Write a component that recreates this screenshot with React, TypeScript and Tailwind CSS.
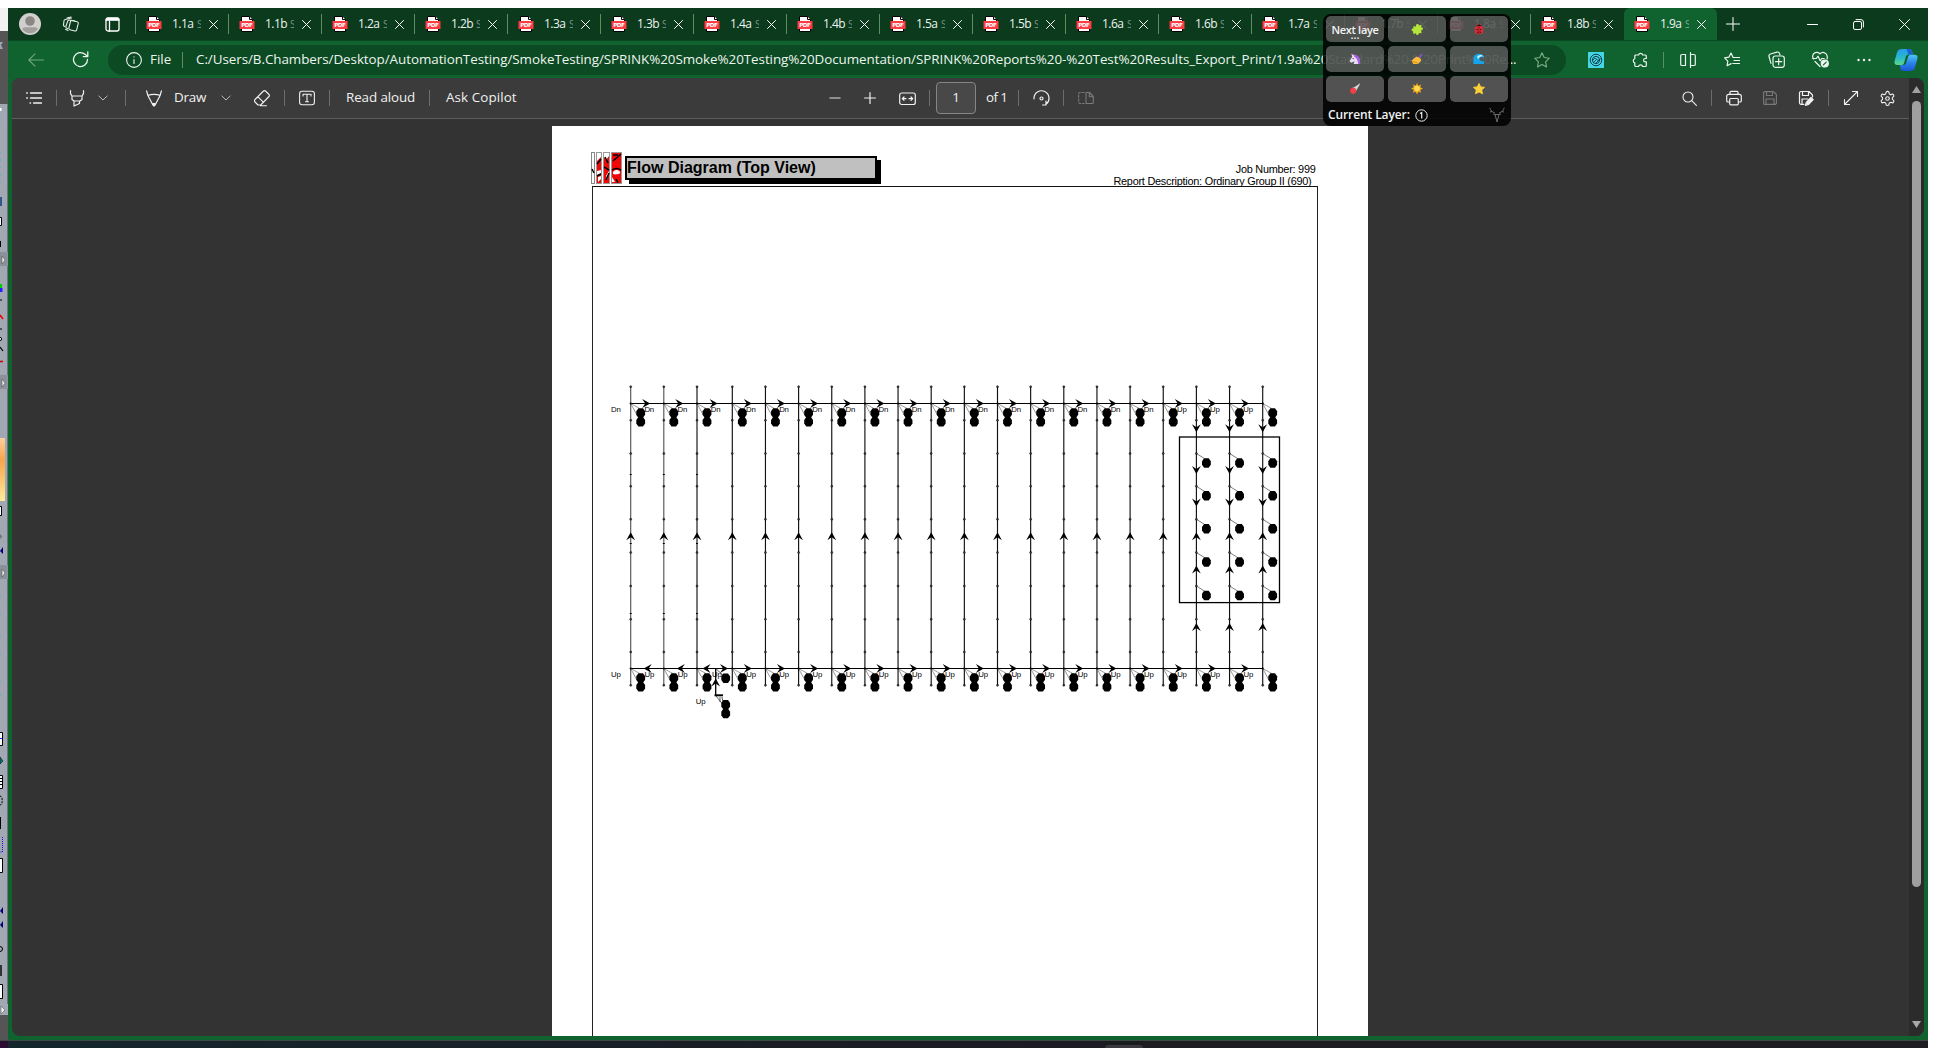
import React from "react";

type P = { className?: string; children?: React.ReactNode; vb?: string; sw?: number };

function Ico({ className = "", children, vb = "0 0 16 16", sw = 1.1 }: P) {
  return (
    <svg className={"shrink-0 " + className} viewBox={vb} fill="none" stroke="currentColor" strokeWidth={sw} strokeLinecap="round" strokeLinejoin="round">
      {children}
    </svg>
  );
}

const tabs = ["1.1a", "1.1b", "1.2a", "1.2b", "1.3a", "1.3b", "1.4a", "1.4b", "1.5a", "1.5b", "1.6a", "1.6b", "1.7a", "1.7b", "1.8a", "1.8b", "1.9a"];

function PdfIcon() {
  return (
    <svg className="h-4 w-4 shrink-0" viewBox="0 0 16 16">
      <path d="M2.500 .5h8l3 3v12h-11z" fill="#fff" stroke="#000" strokeWidth="1" />
      <path d="M10.500 .5v3h3" fill="#fff" stroke="#000" strokeWidth="1" />
      <rect x=".5" y="5" width="15" height="8" rx=".5" fill="#fb3c42" />
      <text x="8" y="11.200" textAnchor="middle" fontSize="5.600" fontWeight="bold" fill="#fff" fontFamily="DejaVu Sans" textLength="11.500">PDF</text>
    </svg>
  );
}

function Tab({ name, active, last }: { name: string; active: boolean; last: boolean }) {
  return (
    <div className={"flex h-8 w-[93px] shrink-0 items-center rounded-t-md pl-2.5 " + (active ? "bg-[#10622f]" : "")}>
      <PdfIcon />
      <span className="ml-[10px] w-[25px] shrink-0 text-[12px] leading-none tracking-[-0.55px] whitespace-nowrap text-[#eef4ef]">{name}</span>
      <span className="w-1 shrink-0 overflow-hidden text-[10.500px] leading-[14px] text-white/45">S</span>
      <Ico className="ml-[8px] h-[9px] w-[9px] text-white" vb="0 0 9 9" sw={1}>
        <path d="M.5.5l8 8M8.500.5l-8 8" />
      </Ico>
      <span className={"ml-auto h-5 w-px " + (last ? "bg-transparent" : "bg-[#5d8f62]")} />
    </div>
  );
}

function Sep({ className = "" }) {
  return <span className={"h-4 w-px shrink-0 bg-[#6d6d6d] " + className} />;
}

function TitleBar() {
  return (
    <div className="flex h-8 w-full shrink-0 items-center bg-[#0b3a1d]">
      <svg className="ml-[11px] h-[22px] w-[22px] shrink-0" viewBox="0 0 22 22">
        <circle cx="11" cy="11" r="11" fill="#d2d0ce" />
        <circle cx="11" cy="8" r="4.800" fill="#8a8785" />
        <path d="M3.500 16.500c0-1.500 1-2.300 2.500-2.300h10c1.500 0 2.500.8 2.500 2.300a9.300 9.300 0 0 1-15 0z" fill="#a19e9b" />
      </svg>
      <Ico className="ml-[21px] h-[17px] w-[17px] text-[#e6eee8]" vb="0 0 17 17">
        <rect x="7.500" y="5" width="8" height="9.500" rx="1.500" transform="rotate(14 11.500 10)" />
        <path d="M5.600 12.500l-.8-.3a1.500 1.500 0 0 1-.9-1.900l1.900-5.300a1.500 1.500 0 0 1 1.900-.9l5 .9" />
        <path d="M2.800 10.500a1.500 1.500 0 0 1-1.300-1.700l.5-4a1.500 1.500 0 0 1 1.300-1.300L9.500 2" />
        <path d="M6 14.500l-2.500-1.200M5 2l4-1" />
      </Ico>
      <Ico className="ml-[26px] h-[15px] w-[15px] text-white" vb="0 0 15 15" sw={1.3}>
        <rect x="1" y="1" width="13" height="13" rx="2" />
        <path d="M1 3h13M4.500 4.500V14" />
        <path d="M2 2h11" strokeWidth="2.400" />
      </Ico>
      <span className="ml-[15px] h-5 w-px bg-[#5d8f62]" />
      {tabs.map((t, i) => (
        <Tab key={t} name={t} active={i === 16} last={i >= 15} />
      ))}
      <Ico className="ml-[9px] h-[14px] w-[14px] text-white" vb="0 0 14 14" sw={1}>
        <path d="M7 .5v13M.5 7h13" />
      </Ico>
      <Ico className="ml-[67px] h-[11px] w-[11px] text-white" vb="0 0 11 11" sw={1.1}>
        <path d="M.5 5.500h10" />
      </Ico>
      <Ico className="ml-[35px] h-[11px] w-[11px] text-white" vb="0 0 11 11" sw={1}>
        <rect x=".5" y="2.500" width="8" height="8" rx="1.500" />
        <path d="M3 .6h5a2.400 2.400 0 0 1 2.400 2.400v5" />
      </Ico>
      <Ico className="ml-[35px] h-[11px] w-[11px] text-white" vb="0 0 11 11" sw={1}>
        <path d="M.5.5l10 10M10.500.5l-10 10" />
      </Ico>
    </div>
  );
}

function NavBar() {
  return (
    <div className="flex h-[38px] w-full shrink-0 items-center border-t border-[#0a4a22] bg-[#10622f] text-[#edf5ef]">
      <Ico className="ml-[20px] h-4 w-4 text-[#6fa57b]">
        <path d="M15.500 8H1M7 1.800L.8 8 7 14.200" />
      </Ico>
      <Ico className="ml-[28px] h-[17px] w-[17px]" vb="0 0 17 17" sw={1.3}>
        <path d="M15.500 8.500A7 7 0 1 1 13 3.200L15.800 5.500M15.800 1v4.600h-4.500" />
      </Ico>
      <div className="ml-[19px] flex h-[30px] w-[1458px] shrink-0 items-center rounded-full bg-[#0b4a22]">
        <Ico className="ml-[18px] h-4 w-4">
          <circle cx="8" cy="8" r="7.400" />
          <path d="M8 7.500v4M8 4.700v.2" />
        </Ico>
        <span className="ml-2 w-[23px] text-[13.400px] leading-none whitespace-nowrap">File</span>
        <span className="ml-[9px] h-4 w-px bg-[#5d8f62]" />
        <span className="ml-[13px] w-[1326px] shrink-0 text-[13.400px] leading-none tracking-[-0.05px] whitespace-nowrap">
          C:/Users/B.Chambers/Desktop/AutomationTesting/SmokeTesting/SPRINK%20Smoke%20Testing%20Documentation/SPRINK%20Reports%20-%20Test%20Results_Export_Print/1.9a%20<span className="tracking-[-0.32px]"><span className="text-[#9cc0a6]">Standard%20-%20Print%20Re</span>...</span>
        </span>
        <Ico className="ml-[12px] h-4 w-4 text-[#7fae8b]">
          <path d="M8 .8l2.200 4.700 5.100.7-3.700 3.600.9 5.100L8 12.500l-4.500 2.400.9-5.100L.7 6.200l5.100-.7z" />
        </Ico>
      </div>
      <svg className="ml-[22px] h-4 w-4 shrink-0" viewBox="0 0 16 16" fill="none" stroke="#0b3f4b">
        <rect width="16" height="16" fill="#45d6e6" stroke="none" />
        <circle cx="8" cy="8" r="5.800" />
        <circle cx="8" cy="8" r="3.600" />
        <path d="M4 9l3-3 3 2.500 3-2M5 11l4-4M7 12l4-4" strokeWidth=".8" />
      </svg>
      <Ico className="ml-[28px] h-4 w-4" sw={1.2}>
        <path d="M3.800 3h2.700a2.200 2.200 0 0 1 4.200 0h2.600a1 1 0 0 1 1 1v2.500h-1a1.700 1.700 0 0 0 0 3.400h1v3.600a1 1 0 0 1-1 1h-2.600a2.200 2.200 0 0 0-4.200 0H3.800a1 1 0 0 1-1-1v-2.600a2.200 2.200 0 0 1 0-4.200V4a1 1 0 0 1 1-1z" />
      </Ico>
      <span className="ml-[15px] h-4 w-px bg-[#5d8f62]" />
      <Ico className="ml-[16px] h-4 w-4" sw={1.2}>
        <path d="M5 2.500H2A1.300 1.300 0 0 0 .7 3.800v8.400A1.300 1.300 0 0 0 2 13.500h3M11 2.500h3a1.300 1.300 0 0 1 1.300 1.300v8.400a1.300 1.300 0 0 1-1.300 1.300h-3M5.500 2.500v11M10.500.6v14.800" />
      </Ico>
      <Ico className="ml-[28px] h-4 w-4" sw={1.2}>
        <path d="M9 5.200L7 1 4.900 5.200.6 5.900l3.200 3.200-.7 4.700 4-2.200M9 5.500h6.500M10 8.500h5.500M8.800 11.500h6.700" />
      </Ico>
      <Ico className="ml-[28px] h-[17px] w-[17px]" vb="0 0 17 17" sw={1.2}>
        <rect x="5" y="5" width="11.300" height="11.300" rx="2.200" />
        <path d="M3 12.300L1 5.500a2 2 0 0 1 1.400-2.500L9 1.100a2 2 0 0 1 2.500 1.400l.5 1.500M10.700 7.500v6.300M7.500 10.700h6.300" />
      </Ico>
      <Ico className="ml-[27px] h-[17px] w-[17px]" vb="0 0 17 17" sw={1.2}>
        <path d="M1.500 8A4 4 0 0 1 8 3a4 4 0 0 1 7 1.500A5 5 0 0 1 15 8M3 10.500l5 5M.8 7.500h3.500L6 5.200l2.200 4.600 1.500-2.300h2.500" />
        <circle cx="12.800" cy="12.500" r="3.500" fill="currentColor" />
        <path d="M11.400 13.900l2.800-2.800" stroke="#10622f" />
      </Ico>
      <Ico className="ml-[27px] h-4 w-4">
        <g fill="currentColor" stroke="none">
          <circle cx="2.500" cy="8" r="1.200" />
          <circle cx="8" cy="8" r="1.200" />
          <circle cx="13.500" cy="8" r="1.200" />
        </g>
      </Ico>
      <svg className="ml-[22px] h-6 w-6 shrink-0" viewBox="0 0 24 24">
        <defs>
          <linearGradient id="ca" x1="0" y1="0" x2="0" y2="1"><stop offset="0" stopColor="#2a9bea" /><stop offset=".5" stopColor="#25b7cf" /><stop offset="1" stopColor="#5fd68a" /></linearGradient>
          <linearGradient id="cb" x1="0" y1="0" x2="0" y2="1"><stop offset="0" stopColor="#4fc8f6" /><stop offset=".5" stopColor="#2d84e8" /><stop offset="1" stopColor="#1a56d8" /></linearGradient>
        </defs>
        <path d="M8.500 1h7c1.500 0 2.300 1 2.600 2.500l.8 3h-4c-2 0-2.800 1-3.300 3L10 15c-.5 1.500-1.300 2-3 2H3.500C1 17 0 15.500.6 13L3 4.500C3.600 2 5.500 1 8.500 1z" fill="url(#ca)" />
        <path d="M15.500 23h-6c-1.500 0-2.500-1-3-2.500l-.7-3.500h3.500c1.500 0 2.500-.8 3-2.500l1.800-5.500c.5-1.500 1.300-2.300 3-2.300H20.500c2.500 0 3.500 1.500 2.900 4L21 19.500c-.6 2.500-2.500 3.500-5.500 3.500z" fill="url(#cb)" />
        <path d="M15.500 1c1.500 0 2.300 1 2.600 2.500l.8 3h-4.500L12.500 1z" fill="#1c5fd0" />
      </svg>
    </div>
  );
}

const chevron = <path d="M.8 3l4.200 4L9.200 3" />;

function PdfToolbar() {
  return (
    <div className="flex h-[41px] w-full shrink-0 items-center border-b border-[#5e5e5e] bg-[#3b3b3b] text-[13.400px] leading-none whitespace-nowrap text-[#f1f1f1]">
      <Ico className="ml-[14px] h-4 w-4" sw={1.3}>
        <path d="M4.500 3h11M4.500 8h11M7.500 13h8M.6 3h.8M.6 8h.8M4 13h.6" />
      </Ico>
      <Sep className="ml-[14px]" />
      <Ico className="ml-[12px] h-[17px] w-4" vb="0 0 16 17" sw={1.2}>
        <path d="M1.500.6v3L3 6h10l1.500-2.400v-3M3 6v3.500L5 11h6l2-1.500V6M5 11v5l5.500-2.500V11" />
      </Ico>
      <Ico className="ml-[13px] h-[10px] w-[10px] text-[#bbb]" vb="0 0 10 10" sw={1}>{chevron}</Ico>
      <Sep className="ml-[17px]" />
      <Ico className="ml-[20px] h-[17px] w-4" vb="0 0 16 17" sw={1.2}>
        <path d="M.6.8l1.300 4.700 5 9.500c.4.900 1.800.9 2.200 0l5-9.500L15.400.8M1.900 5.500C5 4 11 4 14.100 5.500" />
        <path d="M6.800 13.500h2.400L8 16z" fill="currentColor" />
      </Ico>
      <span className="ml-[12px] w-[34px] shrink-0 tracking-[-0.2px]">Draw</span>
      <Ico className="ml-[13px] h-[10px] w-[10px] text-[#bbb]" vb="0 0 10 10" sw={1}>{chevron}</Ico>
      <Ico className="ml-[23px] h-[17px] w-4" vb="0 0 16 17" sw={1.1}>
        <path d="M1 9.500L9.500 1a1.400 1.400 0 0 1 2 0L15 4.500a1.400 1.400 0 0 1 0 2L6.700 15H4L1 12a1.700 1.700 0 0 1 0-2.500zM4 6.800l5.500 5.500M6.500 15.800h6" />
      </Ico>
      <Sep className="ml-[14px]" />
      <Ico className="ml-[14px] h-4 w-4">
        <rect x=".6" y="1.200" width="14.800" height="13.600" rx="2.500" />
        <path d="M4 6V4.300h8V6M8 4.300v7.500M6.500 11.800h3" />
      </Ico>
      <Sep className="ml-[14px]" />
      <span className="ml-[16px] w-[71px] shrink-0 tracking-[-0.1px]">Read aloud</span>
      <Sep className="ml-[12px]" />
      <span className="ml-[16px] w-[72px] shrink-0 tracking-[0.1px]">Ask Copilot</span>
      <Ico className="ml-[311px] h-3 w-3 text-[#aaa]" vb="0 0 12 12" sw={1.5}><path d="M1 6h10" /></Ico>
      <Ico className="ml-[23px] h-3 w-3" vb="0 0 12 12" sw={1.2}><path d="M6 .6v10.800M.6 6h10.800" /></Ico>
      <Ico className="ml-[23px] h-[17px] w-[17px]" vb="0 0 17 17" sw={1.2}>
        <rect x=".7" y="3" width="15.600" height="11.500" rx="2" />
        <path d="M7 8.700H3.500M5 7L3.300 8.700 5 10.400M10 8.700h3.500M12 7l1.700 1.700L12 10.400" />
      </Ico>
      <Sep className="ml-[13px]" />
      <span className="ml-[6px] flex h-8 w-10 shrink-0 items-center justify-center rounded-sm border border-[#868686] bg-[#484848]">1</span>
      <span className="ml-[10px] w-[22px] shrink-0 tracking-[-0.600px]">of 1</span>
      <Sep className="ml-[10px]" />
      <Ico className="ml-[14px] h-[17px] w-[17px]" vb="0 0 17 17" sw={1.2}>
        <path d="M1 8.500a7.500 7.500 0 1 1 12 5.800M13 11v4h-3.500M1 8.500v.3" />
        <circle cx="8.500" cy="8.500" r="1.500" />
      </Ico>
      <Sep className="ml-[13px]" />
      <Ico className="ml-[14px] h-4 w-4 text-[#7a7a7a]">
        <path d="M8 2.500v11h6.300a1 1 0 0 0 1-1V6.500L11.500 2.500zM11.300 2.700v4h4" />
        <path d="M6 2.500H2a1.300 1.300 0 0 0-1.300 1.300v8.400A1.300 1.300 0 0 0 2 13.500h4" strokeDasharray="2 1.700" />
      </Ico>
      <Ico className="ml-[588px] h-[15px] w-[15px]" vb="0 0 15 15">
        <circle cx="6" cy="6" r="5" />
        <path d="M9.700 9.700l4.700 4.700" />
      </Ico>
      <Sep className="ml-[14px]" />
      <Ico className="ml-[14px] h-4 w-4" sw={1.2}>
        <path d="M4 4V2.300A1 1 0 0 1 5 1.300h6a1 1 0 0 1 1 1V4M3.500 12H2a1.300 1.300 0 0 1-1.300-1.300V6.300A2 2 0 0 1 2.700 4.300h10.600a2 2 0 0 1 2 2v4.400A1.300 1.300 0 0 1 14 12h-1.500" />
        <rect x="3.700" y="8.500" width="8.600" height="6.300" rx="1" />
      </Ico>
      <Ico className="ml-[21px] h-[14px] w-[14px] text-[#7a7a7a]" vb="0 0 14 14">
        <path d="M2 .6h8.500L13.400 3.500V12a1.300 1.300 0 0 1-1.300 1.400H2A1.300 1.300 0 0 1 .6 12V2A1.300 1.300 0 0 1 2 .6zM3.500.8V4.500h6V.8M3 13.200V8h8v5.200" />
      </Ico>
      <Ico className="ml-[21px] h-4 w-4" sw={1.2}>
        <path d="M6 14.300H3A1.500 1.500 0 0 1 1.500 12.800V3A1.500 1.500 0 0 1 3 1.500h8L14.500 5v2M4.500 1.700V5.500h6V1.700M4 14V9h6" />
        <path d="M7.500 15.300l.8-3L13 7.500l2.200 2.200-4.800 4.800z" fill="currentColor" />
      </Ico>
      <Sep className="ml-[14px]" />
      <Ico className="ml-[14px] h-4 w-4">
        <path d="M1.500 14.500l13-13M9.500 1.500h5v5M6.500 14.500h-5v-5" />
      </Ico>
      <Ico className="ml-[20px] h-[17px] w-[17px]" vb="0 0 24 24" sw={1.600}>
        <path d="M12.200 2h-.4a2 2 0 0 0-2 2v.2a2 2 0 0 1-1 1.700l-.4.300a2 2 0 0 1-2 0l-.2-.1a2 2 0 0 0-2.700.7l-.2.400a2 2 0 0 0 .7 2.700l.2.100a2 2 0 0 1 1 1.700v.5a2 2 0 0 1-1 1.700l-.2.100a2 2 0 0 0-.7 2.700l.2.400a2 2 0 0 0 2.700.7l.2-.1a2 2 0 0 1 2 0l.4.300a2 2 0 0 1 1 1.700v.2a2 2 0 0 0 2 2h.4a2 2 0 0 0 2-2v-.2a2 2 0 0 1 1-1.700l.4-.3a2 2 0 0 1 2 0l.2.100a2 2 0 0 0 2.700-.7l.2-.4a2 2 0 0 0-.7-2.700l-.2-.1a2 2 0 0 1-1-1.700v-.5a2 2 0 0 1 1-1.700l.2-.1a2 2 0 0 0 .7-2.700l-.2-.4a2 2 0 0 0-2.700-.7l-.2.100a2 2 0 0 1-2 0l-.4-.3a2 2 0 0 1-1-1.700V4a2 2 0 0 0-2-2z" />
        <circle cx="12" cy="12" r="2.500" />
      </Ico>
    </div>
  );
}

/* Pipe network in plan view */
const cols = [630.7, 663.8, 697, ...Array.from({ length: 17 }, (_, k) => 732.3 + 33.15 * k)];
const nodeYs = [386.7, 420.3, 453.5, 486.3, 519.3, 552.5, 586, 619.3, 652, 685.3];

function Hex({ x, y }: { x: number; y: number }) {
  return <path d={`M${x - 2.3} ${y - 4.7}h4.600l2.100 3v3.400l-2.100 3h-4.600l-2.100-3v-3.400z`} fill="#000" />;
}

function Arrow({ x, y, r }: { x: number; y: number; r: number }) {
  return <path d="M0 0L-8 -4.400L-5 0L-8 4.400Z" fill="#000" transform={`translate(${x} ${y}) rotate(${r})`} />;
}

function Label({ x, y, t }: { x: number; y: number; t: string }) {
  return <text x={x} y={y} fontSize="7.800" fontFamily="Liberation Sans, sans-serif" textLength="9.800">{t}</text>;
}

function Cluster({ x, y }: { x: number; y: number }) {
  return (
    <g>
      <path d={`M${x} ${y}L${x + 7} ${y + 13}M${x} ${y}L${x + 9} ${y + 5}`} stroke="#555" strokeWidth=".6" />
      <circle cx={x} cy={y} r="1.100" />
      <Hex x={x + 10} y={y + 9.500} />
      <Hex x={x + 10} y={y + 18.300} />
    </g>
  );
}

function Diagram() {
  return (
    <svg className="h-[849px] w-[724px] shrink-0" viewBox="593 187 724 849">
      <path d="M630.500 403.500H1263M630.500 668.500H1263" stroke="#000" strokeWidth="1.200" />
      {cols.map((x, i) => (
        <g key={x}>
          <path d={`M${x} 386.500V685.500`} stroke={i < 3 ? "#555" : "#111"} strokeWidth={i === 2 ? 1.600 : 1.150} />
          {nodeYs.map((y) => (
            <circle key={y} cx={x} cy={y} r="1" fill="#444" stroke="#000" strokeWidth=".5" />
          ))}
          {i < 3 && [474.5, 543.5, 613.5].map((y) => <rect key={y} x={x - 1} y={y - 0.5} width="2" height="1" />)}
          {i < 19 && <Label x={x + 13.700} y={412.300} t={i < 16 ? "Dn" : "Up"} />}
          {i < 19 && <Label x={x + 13.900 + (i === 2 ? 1.200 : 0)} y={677.300} t="Up" />}
          <Cluster x={x} y={403.500} />
          <Cluster x={x} y={668.500} />
          {i < 19 && <Arrow x={x + (i === 2 ? 20.600 : 19.500)} y={403.500} r={0} />}
          {i > 2 && i < 19 && <Arrow x={x + 19.500} y={668.500} r={0} />}
          {i < 2 && <Arrow x={x + 13} y={668.500} r={180} />}
          <Arrow x={x} y={532.300} r={-90} />
          {i > 16 && (
            <g>
              <Arrow x={x} y={432.300} r={90} />
              <Arrow x={x} y={474} r={90} />
              <Arrow x={x} y={506.500} r={90} />
              <Arrow x={x} y={565.600} r={-90} />
              <Arrow x={x} y={623} r={-90} />
              {[453.5, 486.3, 519.3, 552.5, 586].map((y) => (
                <g key={y}>
                  <path d={`M${x} ${y}L${x + 8} ${y + 5}`} stroke="#444" strokeWidth=".7" />
                  <Hex x={x + 10} y={y + 9.500} />
                </g>
              ))}
            </g>
          )}
        </g>
      ))}
      <Arrow x={702.500} y={668.500} r={180} />
      <Arrow x={728} y={668.500} r={0} />
      <path d="M715.700 668.500V695" stroke="#000" strokeWidth="1.300" />
      <path d="M714.500 695.300H723" stroke="#000" strokeWidth="2" />
      <path d="M715.700 695.500L724 706M715.700 668.500L724 676M720 697v5M722 697l1 5" stroke="#333" strokeWidth=".8" />
      <Arrow x={715.700} y={678.500} r={-90} />
      <Hex x={725.700} y={678.300} />
      <Hex x={725.700} y={704.700} />
      <Hex x={725.700} y={713.500} />
      <Label x={611} y={412.300} t="Dn" />
      <Label x={611} y={677.300} t="Up" />
      <Label x={695.700} y={704} t="Up" />
      <rect x="1179.500" y="437" width="100" height="165.600" fill="none" stroke="#000" strokeWidth="1.300" />
    </svg>
  );
}

function Logo() {
  return (
    <svg className="h-8 w-8 shrink-0" viewBox="0 0 32 32">
      <rect x=".5" y=".5" width="3" height="31" fill="#fff" stroke="#888" />
      <rect x="5.500" y=".5" width="5" height="31" fill="#f00808" stroke="#999" />
      <rect x="12.500" y=".5" width="6" height="31" fill="#f00808" stroke="#999" />
      <rect x="20.500" y=".5" width="10" height="31" fill="#f00808" stroke="#999" />
      <path d="M6 1h4v4l-4 4zM6 19l4-1v3l-4 2zM13 1h5v3l-3 4-2-3zM7 25l3-1v3l-3 3zM15 24l3-5v3l-2 5zM22 20c3-3 6-2 7 0s-4 3-7 2zM21 25l3 5h-3z" fill="#fff" />
      <path d="M6 12l4-5M6 24l4-2M14 5l3 6M15 28l3-7M22 9l8-7M21 18c3-2 6-2 9 0M25 27l2 4M1 17l2 4M13 15l5 3M22 3h5" stroke="#000" strokeWidth="1.500" fill="none" />
    </svg>
  );
}

function Page() {
  return (
    <div className="mt-[7px] ml-[540px] flex w-[816px] shrink-0 flex-col overflow-hidden bg-white px-[40px] pt-[26px] font-['Liberation_Sans',Arial,sans-serif] text-black">
      <div className="-ml-px flex h-[34px] w-[726px] shrink-0 items-start">
        <Logo />
        <div className="mt-1 ml-[2px] h-6 w-[252px] shrink-0 border-2 border-black bg-[#c0c0c0] text-[16px] leading-[19px] font-bold whitespace-nowrap shadow-[4px_4px_0_#000]">
          Flow Diagram (Top View)
        </div>
        <div className="mt-[11px] ml-auto flex flex-col items-end text-[10.900px] leading-[12px] tracking-[-0.25px] whitespace-nowrap">
          <span className="mr-[1.500px]">Job Number: 999</span>
          <span className="mr-[5.500px]">Report Description: Ordinary Group II (690)</span>
        </div>
      </div>
      <div className="flex h-[860px] w-[726px] shrink-0 border-[1.500px] border-b-0 border-[#222] border-t-[#111]">
        <Diagram />
      </div>
    </div>
  );
}

function ScrollBar() {
  return (
    <div className="flex w-[15px] shrink-0 flex-col items-center bg-[#2b2b2b]">
      <svg className="mt-2 h-[7px] w-[9px]" viewBox="0 0 9 7"><path d="M4.500 0L9 7H0z" fill="#a0a0a0" /></svg>
      <span className="mt-2 h-[786px] w-[9px] rounded-full bg-[#9f9f9f]" />
      <svg className="mt-auto mb-[8px] h-[7px] w-[9px]" viewBox="0 0 9 7"><path d="M4.500 7L9 0H0z" fill="#a8a8a8" /></svg>
    </div>
  );
}

/* Sliver of the application behind the browser */
function BackApp() {
  return (
    <div className="flex w-2 shrink-0 flex-col">
      <div className="h-[23px] bg-[#f2f2f2]" />
      <svg className="h-[73px] w-2" viewBox="0 31 8 73">
        <rect y="31" width="8" height="73" fill="#555" />
        <path d="M0 42h3l-2 3 2 4H0" fill="#9aa5b5" />
      </svg>
      <svg className="h-[900px] w-2" viewBox="0 104 8 900">
        <rect y="104" width="8" height="900" fill="#a1a7b3" />
        <rect x="7" y="104" width="1" height="900" fill="#6d727b" />
        <path d="M0 120h1M0 153h1M0 160h1M0 167h1M0 175h1M0 182h1M0 408h1M0 424h1M0 596h1M0 614h1M0 636h1M0 654h1M0 682h1M0 695h1" stroke="#65b4bd" strokeWidth="1.500" />
        <rect y="108" width="1.500" height="3" fill="#fff" />
        <rect y="197" width="2" height="9" fill="#31588c" />
        <path d="M0 217.500h1.500v8H0" fill="#fff" stroke="#000" />
        <path d="M0 241h1v6H0z" />
        {[252, 375, 565].map((y) => (
          <g key={y}><rect y={y} width="8" height="14" fill="#8b909a" /><path d={`M2 ${y + 4}l3 4-3 4z`} fill="#eee" stroke="#444" strokeWidth=".5" /></g>
        ))}
        <rect y="284" width="2" height="4" fill="#0c0" /><rect y="288" width="2.500" height="4" fill="#22f" />
        <path d="M0 315l3 4" stroke="#e00" strokeWidth="1.500" />
        <path d="M0 347l3 4M0 300h2M0 329h2" stroke="#000" strokeWidth="1.200" />
        <path d="M0 361.500h3" stroke="#c00" strokeWidth="1.500" />
        <circle cx="0" cy="339" r="1.600" fill="#fff" stroke="#000" />
        <linearGradient id="og" x1="0" y1="0" x2="0" y2="1"><stop offset="0" stopColor="#fbcf9d" /><stop offset=".35" stopColor="#f9a64a" /><stop offset="1" stopColor="#fdea9a" /></linearGradient>
        <rect y="438" width="5" height="63" fill="url(#og)" />
        <path d="M0 506.500h1.500v9H0" fill="#fff" stroke="#000" />
        <path d="M0 534l2.500 2.500L0 539" fill="#777" />
        <path d="M3 547v7l-3-3z" fill="#00007a" />
        <path d="M0 732.500h2.500v13H0M0 775.500h2.500v13H0M0 778.500h2M0 781.500h2M0 784.500h2M0 858.500h2.500v14H0M0 984.500h2.500v14H0" fill="#fff" stroke="#000" />
        <path d="M0 738.500h2" stroke="#22f" />
        <path d="M0 757l3 4-3 3z" fill="#08777a" stroke="#000" strokeWidth=".5" />
        <path d="M0 796c3 0 3 9 0 9" stroke="#000" fill="none" strokeDasharray="2 1" />
        <rect y="817" width="1" height="12" /><path d="M2.500 837v15H0" stroke="#11e" fill="none" strokeDasharray="1 1" />
        <path d="M3 907v7l-3-3zM3 921v7l-3-3z" fill="#00007a" />
        <circle cx="0" cy="949" r="2.500" fill="none" stroke="#000" /><rect y="965" width="2" height="11" fill="#333" />
      </svg>
      <div className="flex flex-1 flex-col bg-[#555]">
        <svg className="h-[11px] w-2" viewBox="0 0 8 11"><rect width="8" height="11" fill="#a1a7b3" /><path d="M1 2l4 4-4 4z" fill="#eee" stroke="#444" strokeWidth=".5" /></svg>
      </div>
    </div>
  );
}

const pads = [
  <g key="p"><path d="M2 3.500l3 .3C4 1 8 0 8 2.800L10.500 2l.3 3C13 4.500 13 8 10.500 7.800L11 11l-3-.3c.3 2.800-3.300 3-3 .3L2 12l-.3-3.200C-.5 9-.5 5.500 2 6z" fill="#b4e63a" /></g>,
  <g key="l"><path d="M1 5l2 1M1 11l2-1M11 5L9 6M11 11l-2-1M4 1l1 2M8 1L7 3" stroke="#e22b36" strokeWidth="1" /><ellipse cx="6" cy="7.500" rx="4.600" ry="4.700" fill="#e22b36" /><path d="M3.500 3.500a2.600 2.600 0 0 1 5 0zM5.700 4h.6v8h-.6z" fill="#3a1015" /><circle cx="4" cy="7" r=".8" fill="#3a1015" /><circle cx="8" cy="7" r=".8" fill="#3a1015" /><circle cx="4.500" cy="10" r=".7" fill="#3a1015" /><circle cx="7.500" cy="10" r=".7" fill="#3a1015" /></g>,
  <g key="u"><path d="M0 9l3-5L2 .5 5 3c4-1 7 3 6.500 9H4.500L5.500 9 2 10.500z" fill="#eadcf5" /><path d="M5 2c4-1 7 3 6.500 10H9.500C9 8 8 5 5 4z" fill="#a45ee0" /><path d="M3.500 1L5 4 6 3z" fill="#f39ad0" /><circle cx="4" cy="6" r=".7" fill="#333" /></g>,
  <g key="c"><path d="M0 8.500L5 4c3.500 0 5.500 2 5.500 4.500L7 12H2z" fill="#fdbd3a" /><path d="M1 9l6 2" stroke="#d98810" /><path d="M7.500 4l3-3.500L12 2 9.500 6z" fill="#7d59b5" /></g>,
  <g key="w"><path d="M0 12V5C1 1.500 4 .5 7 1c3 0 5 2 4.500 5-1-2-3-2-4-1C5.500 7 7 9.500 11.500 9v3z" fill="#15a4ea" /><path d="M4 4c1-2 5-3 7 0-2-1-5 0-6 3" fill="#d6f3fd" /></g>,
  <g key="m"><path d="M11.500 1L3 5.500 6.500 10z" fill="#c9c3c3" /><path d="M11 1L5 7" stroke="#fff" /><circle cx="4" cy="8.500" r="3.300" fill="#ee4148" /></g>,
  <g key="g"><path d="M6 0l1.500 3L10.500 1.500 9.500 4.500l3 1.500-3 1.500 1 3-3-1L6 12.500 4.500 9.500l-3 1 1-3L-.5 6l3-1.500-1-3 3 1.500z" fill="#f2a817" /><circle cx="6" cy="6" r="3" fill="#fddc55" /></g>,
  <g key="s"><path d="M6 .5l1.800 3.700 4.200.5-3.100 2.800.9 4.200L6 9.700l-3.800 2 .9-4.200L0 4.700l4.200-.5z" fill="#fbd038" stroke="#fbd038" strokeLinejoin="round" /></g>,
];

function LayerPad() {
  return (
    <div className="absolute top-[14px] left-[1323px] flex h-[112px] w-[188px] flex-col rounded-lg bg-black/85 px-[3px] pt-[2px] text-[#f2f2f2]">
      <div className="grid h-[86px] grid-cols-3 grid-rows-3 gap-1">
        <div className="flex flex-col items-center justify-center rounded-[5px] bg-white/30 text-[11px] leading-none font-semibold">
          <span className="mt-[5px] tracking-[-0.3px] whitespace-nowrap">Next laye</span>
          <span className="-mt-[5px] text-[11px] leading-[9px]">...</span>
        </div>
        {pads.map((g, i) => (
          <div key={i} className="flex items-center justify-center rounded-[5px] bg-white/30">
            <svg className="h-3 w-3" viewBox="0 0 12 13">{g}</svg>
          </div>
        ))}
      </div>
      <div className="flex flex-1 items-center pt-[2px] pl-[2px] text-[12px] leading-none font-semibold">
        <span className="w-[80px] tracking-[-0.100px] whitespace-nowrap">Current Layer:</span>
        <svg className="ml-[7px] h-[13px] w-[13px]" viewBox="0 0 13 13">
          <circle cx="6.500" cy="6.500" r="5.700" fill="none" stroke="#eee" />
          <path d="M5 4.500l1.700-1v6" fill="none" stroke="#eee" strokeWidth="1.200" />
        </svg>
        <svg className="mr-[3px] ml-auto h-4 w-4 text-[#777]" viewBox="0 0 16 16" fill="none" stroke="currentColor" strokeWidth=".9">
          <path d="M6 6C3 5 1.500 3.500.8.8M3 4.500L1 5M10 6c3-1 4.500-2.500 5.200-5.200M13 4.500l2 .5M4 7l2 .500L8 15l2-7.500L12 7M6 7.500h4" />
        </svg>
      </div>
    </div>
  );
}

export default function App() {
  return (
    <div className="relative flex h-[1048px] w-[1936px] flex-col overflow-hidden bg-white pt-2 font-['Open_Sans','Noto_Sans',sans-serif]">
      <div className="flex h-[1032px] w-full shrink-0">
        <BackApp />
        <div className="flex w-[1920px] shrink-0 flex-col bg-[#10622f]">
          <TitleBar />
          <NavBar />
          <div className="mx-1 flex h-[958px] w-[1912px] overflow-hidden rounded-lg bg-[#333]">
            <div className="flex w-[1897px] shrink-0 flex-col">
              <PdfToolbar />
              <div className="flex min-h-0 flex-1 overflow-hidden">
                <Page />
              </div>
            </div>
            <ScrollBar />
          </div>
        </div>
      </div>
      <div className="flex h-2 w-[1928px] border-t border-[#3d4a44] bg-[#191c1e]">
        <div className="w-2 bg-[#2d0a31]" />
        <div className="w-[1097px] bg-gradient-to-r from-[#13262c] to-[#1c1a22]" />
        <div className="mt-1 w-[38px] rounded-t bg-[#3a3a3e]" />
        <div className="flex-1 bg-[#1d1c20]" />
      </div>
      <LayerPad />
    </div>
  );
}
